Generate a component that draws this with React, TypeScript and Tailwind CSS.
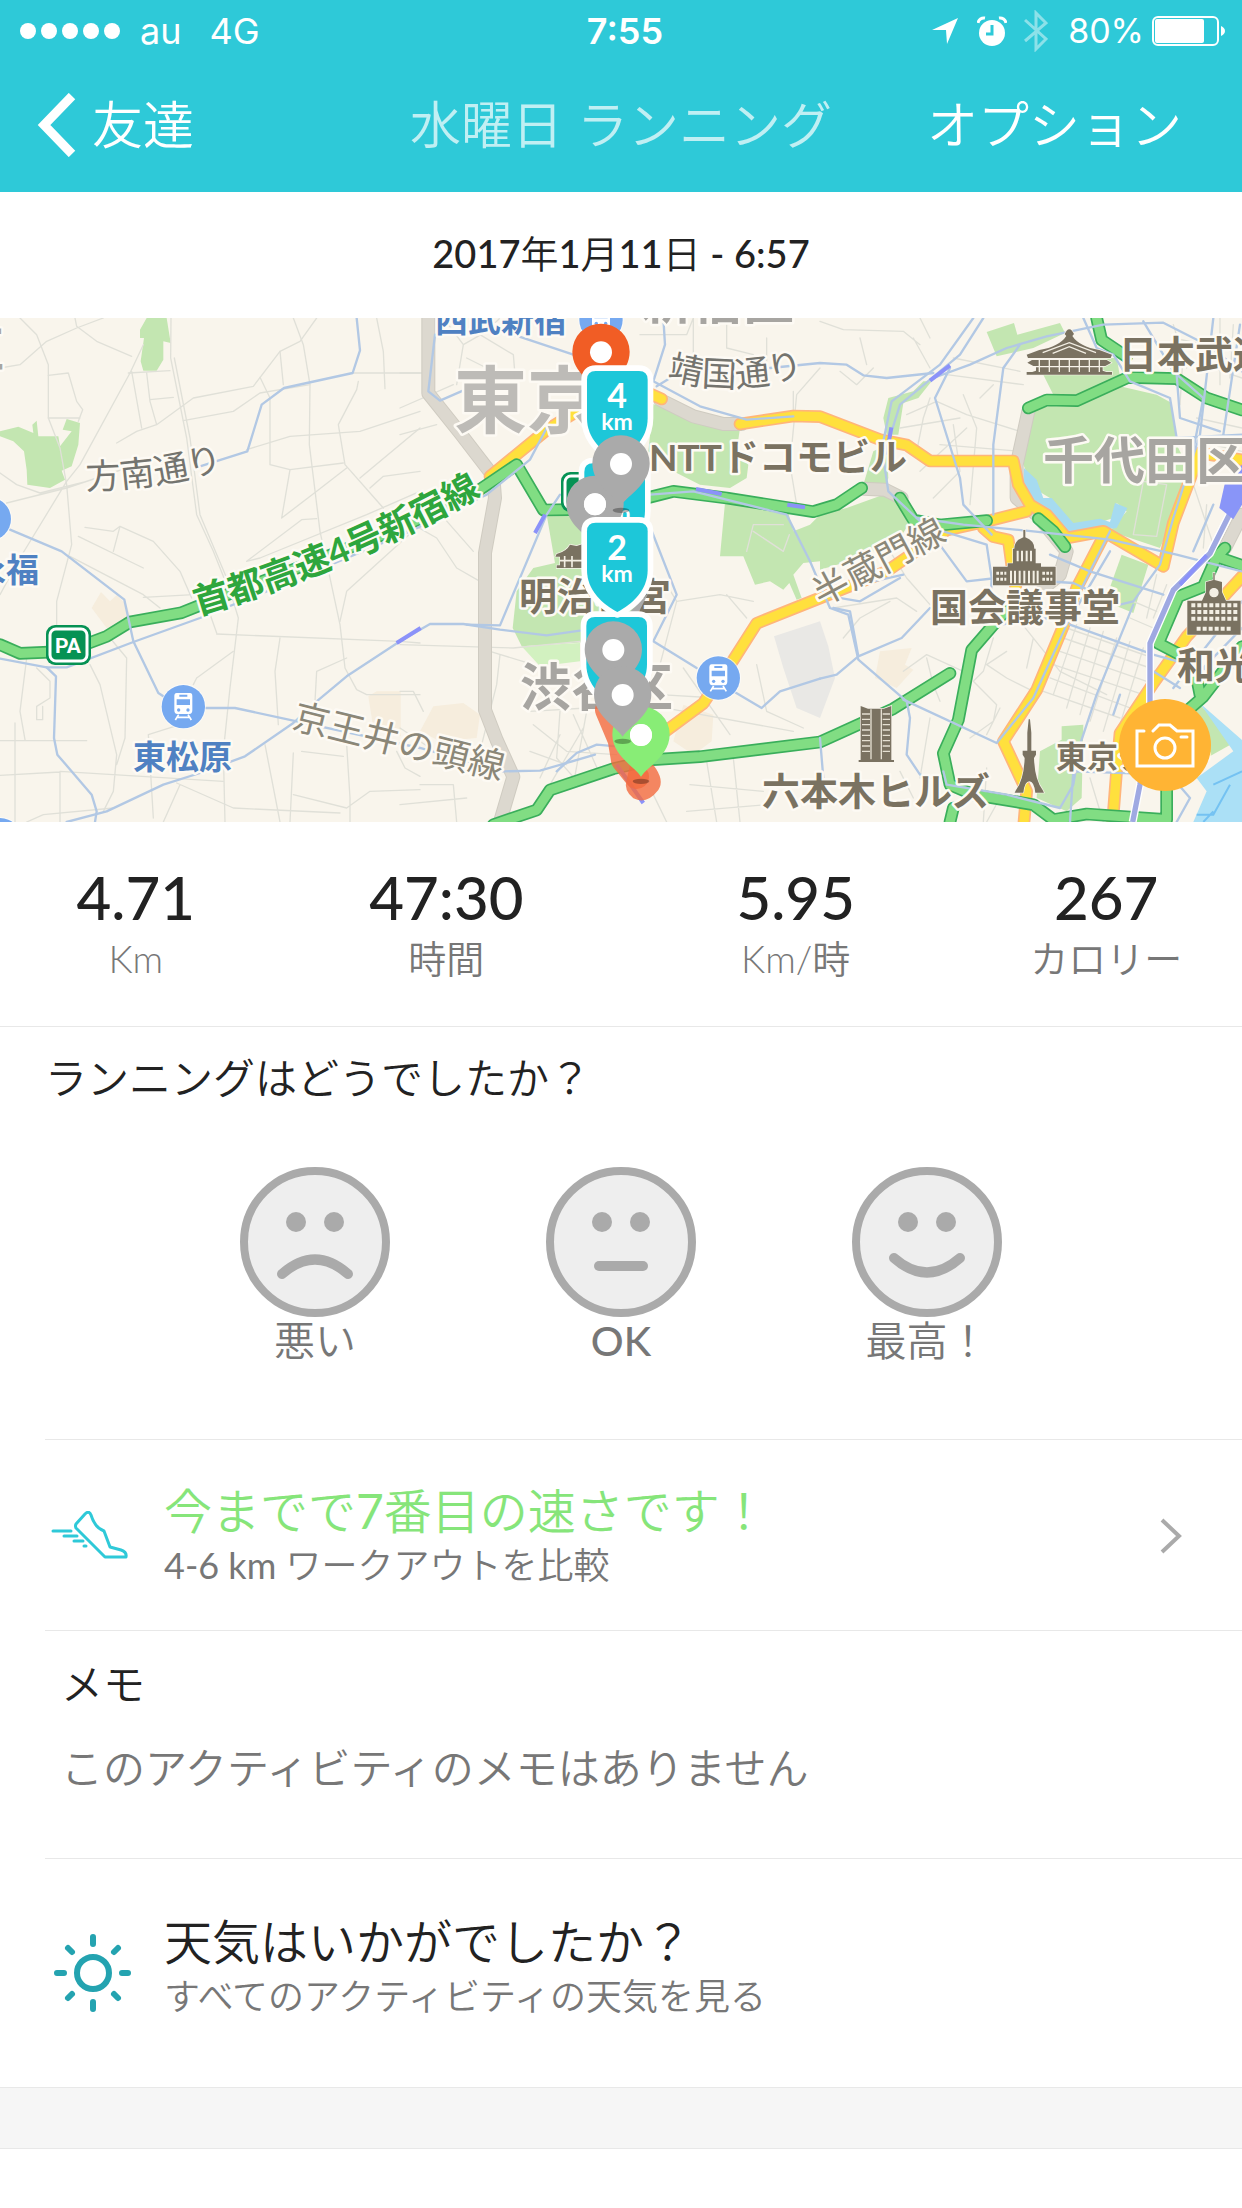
import type { ReactNode } from 'react';

type Line = { x?: number; d: string };

interface LabelData {
  text: string;
  x: number;
  y: number;
  size: number;
  color: string;
  bold?: boolean;
  rotate?: number;
  end?: boolean;
}

const stats = [
  { value: '4.71', unit: 'Km' },
  { value: '47:30', unit: '時間' },
  { value: '5.95', unit: 'Km/時' },
  { value: '267', unit: 'カロリー' },
];

const moods = [
  { label: '悪い', mouth: 'M42 107 Q75 78 108 107' },
  { label: 'OK', mouth: 'M53 99 H97' },
  { label: '最高！', mouth: 'M42 91 Q75 120 108 91' },
];

// Map geometry is drawn on a 3726 x 1512 grid, x shifts a piece to its own tile
const parks: Line[] = [
  { d: 'M440 0 H500 L512 75 L490 70 V125 L470 158 H430 L422 130 L432 60 L420 60 V35 Z' },
  { d: 'M0 340 L55 326 L100 345 L97 320 L110 308 L115 355 H175 L180 385 L215 340 L188 335 L200 303 L240 315 L235 380 L215 445 L185 458 L195 485 L150 510 L82 500 L80 455 L72 400 L40 370 L0 355 Z' },
  { x: 1200, d: 'M760 258 L820 280 L900 318 L1020 330 L1010 400 L1045 440 L1040 480 L990 510 L900 500 L820 460 L745 400 Z' },
  { x: 1200, d: 'M440 590 L540 570 L560 680 L740 780 L690 960 L520 975 L365 985 L338 930 L350 820 L400 750 L465 735 Z' },
  { x: 1200, d: 'M975 555 L1165 585 L1180 640 L1230 620 L1260 590 V730 L1210 735 L1180 770 L1205 840 L1190 845 L1168 795 L1150 815 L1110 790 L1065 800 L1030 715 L960 715 Z' },
  { x: 2460, d: 'M0 590 L80 570 L190 530 L240 560 L265 620 L240 660 L120 720 L0 755 Z' },
  { x: 2460, d: 'M500 42 L582 15 L592 50 L720 15 L735 45 L640 90 L530 115 Z' },
  { x: 2460, d: 'M205 240 L280 220 L310 190 L335 190 L295 240 L250 255 L235 350 L200 350 L190 300 Z' },
  { x: 2460, d: 'M160 400 L200 380 L205 480 L190 520 L130 500 Z' },
  { x: 2460, d: 'M670 170 L820 120 L890 120 L900 175 L770 240 L700 230 Z' },
  { x: 2460, d: 'M640 270 L770 255 L900 205 L1010 230 L1055 255 L1070 380 L1100 440 L1060 600 L1020 690 L870 640 L920 580 L890 555 L880 600 L760 640 L690 540 L640 510 L610 440 Z' },
  { x: 2460, d: 'M905 710 L985 740 L940 885 L855 850 Z' },
  { x: 2460, d: 'M725 1225 L790 1220 L785 1440 L740 1480 L650 1440 L660 1300 L725 1265 Z' },
  { x: 2460, d: 'M1140 1160 L1250 1270 L1160 1320 L1080 1300 L1090 1180 Z' },
];

const sands: Line[] = [
  { d: 'M275 870 L303 822 L330 850 L350 832 L380 860 L395 910 L320 930 Z' },
  { d: 'M1105 1135 L1130 1120 H1202 V1255 L1120 1230 Z' },
  { x: 1200, d: 'M100 1165 L190 1155 L240 1190 L230 1260 L120 1270 L60 1240 Z' },
  { x: 1200, d: 'M850 1160 L940 1190 L935 1270 L880 1310 L820 1270 Z' },
  { x: 2460, d: 'M180 1000 L275 990 L255 1040 L280 1055 L230 1110 L165 1080 Z' },
];

const streets: Line[] = [
  { d: 'M60 0 L110 50 L145 140 V300 L180 390 L200 500 L215 680 L170 850 V930' },
  { d: 'M0 150 L60 140 L140 70 L230 30 L310 0 M225 0 L230 25 L290 70 L395 115 M145 172 L205 165 L230 250 L248 275 L235 310 M145 300 H240' },
  { d: 'M430 80 L390 165 L240 440 L200 490 L60 720 L0 830 M0 465 L50 500 L120 525 L260 490 M20 555 L200 510 L380 450' },
  { d: 'M385 165 L510 158 M395 160 L425 330 M440 165 L450 250 L470 320 M450 245 L520 238 M350 375 L410 340 L470 320 L580 240 L760 205 L840 100 L900 70 L950 0' },
  { d: 'M513 0 L512 120 L560 360 L590 590 L640 700 L700 850 L715 900 L690 1110 L670 1300 L675 1512 M523 120 L570 360 L600 590 L680 780' },
  { d: 'M880 0 L910 80 L930 200 L928 380 L960 640 L1020 920 L1035 1050 L1070 1115 L1100 1130 H1260' },
  { d: 'M1130 0 L1150 100 L1155 212 M1060 165 H1260 M550 308 L700 280 L780 225 L930 200 M840 100 L850 200 M780 178 L810 240 V440 L870 455 L1030 435 M740 395 L870 355 L1080 340 L1260 280' },
  { d: 'M1075 190 L1070 215 L1015 320 L1035 440 L1150 570 M1080 480 L1260 330 M1110 510 L1150 475 L1260 460 M870 455 L845 600 L950 520 L1040 450' },
  { d: 'M740 730 L780 720 L1100 590 L1260 520 M905 605 L950 602 M905 605 L740 730 M1260 620 L1040 820 L1020 910 M650 948 L1200 970 L1260 975' },
  { d: 'M255 628 L340 640 L360 625 L460 670 L540 760 L575 840 M360 625 L340 700 M235 655 L430 750 M210 715 L430 830 L480 870 M430 838 L580 830' },
  { d: 'M590 1080 L700 1000 M590 1080 L580 1100 M840 960 L825 1060 L835 1220 M945 1150 L950 1060 L1040 1020 M620 860 L650 945' },
  { d: 'M270 1040 L300 1100 L350 1310 L340 1420 L310 1480 M330 960 L380 1020 L375 1260 L350 1340 M180 1360 L670 1390 M0 1372 L180 1362 V1512 M0 1268 H260' },
  { d: 'M80 1020 L60 1180 L75 1265 M45 1215 V1512 M110 1050 L150 1090 V1140 L110 1165 V1205 H128 V1165 M445 1250 L540 1220 L590 1210 M445 1250 L460 1500 M340 1470 L130 1490 L80 1512' },
  { d: 'M530 1395 L700 1470 L1020 1485 M540 1400 L490 1512 M880 1305 L870 1512 M1050 1512 V1440 L1040 1280 M880 1430 L1040 1470 L1110 1420 L1260 1415 M905 1300 L1030 1315 M1190 1300 L1215 1350 L1260 1375 M795 1280 L840 1512' },
  { x: 1200, d: 'M0 165 H70 M130 0 L190 80 L170 200 M190 80 L260 40 L300 0 M200 120 L320 180 M240 50 L340 110 L345 170 M0 270 L160 200 M0 350 L110 320' },
  { x: 1200, d: 'M40 620 L110 660 L170 750 L240 790 M0 980 L340 990 L540 970 M120 560 L230 540 M110 575 L220 700' },
  { x: 1200, d: 'M270 1000 L400 1040 M300 1010 L290 1100 L240 1300 M0 1120 H40 L70 1180 M0 1230 L90 1290 M60 1400 H160 L170 1512 M0 1460 L200 1440' },
  { x: 1200, d: 'M390 1180 L560 1170 M400 1220 L500 1300 L650 1310 M420 1380 L480 1250 M450 1400 L550 1230 M480 1180 L470 1320 L540 1400 M520 1190 L600 1370 M390 1300 L500 1340 M560 1180 L520 1400' },
  { x: 1200, d: 'M800 800 L830 850 L960 830 L1060 850 M830 850 L780 1040 M980 830 L1040 900 M780 1130 L950 1140 L1010 1080 M740 1160 L1180 1240 M850 1050 L990 1250 M1070 1040 L1100 1180 L1210 1230' },
  { x: 1200, d: 'M920 1330 L950 1512 M1000 1320 L1020 1512 M870 1400 L1090 1420 M860 1480 L1100 1460 M760 1430 L800 1512 M720 50 H860 L880 0 M880 0 V120 M980 0 V90 L1060 110 M1100 60 V140 M1180 220 V300' },
  { x: 1200, d: 'M1260 150 L1190 230 L1170 440 L1190 560 M1060 640 L1150 700 L1168 650 M1040 700 L1060 620 L1150 620' },
  { x: 2460, d: 'M0 10 L70 35 L250 40 L300 80 M60 160 L110 200 L160 150 M120 60 L140 140 M280 60 L330 150 M300 0 L330 60 M400 120 L600 160 M380 170 L610 200' },
  { x: 2460, d: 'M260 290 L350 250 L440 290 L600 340 M240 330 L420 300 M290 400 L310 300 L330 240 M300 460 L440 330 M340 540 L420 460 L400 320 M430 230 L470 330 L450 560 M360 380 L600 400 M480 240 L520 200' },
  { x: 2460, d: 'M210 700 L260 780 L330 860 M40 870 L230 840 L290 880 M70 960 L120 900 L210 850 M320 1020 L340 1100 L360 1150 M250 1060 L320 1010 L430 1060' },
  { x: 2460, d: 'M520 960 L490 1060 L460 1090 L530 1160 L520 1210 L450 1260 M560 1000 L500 1040 L560 1080 L640 1120 M600 910 L720 1060 L860 1130 M640 960 L620 1050 M540 1170 L500 1250 M300 1380 L330 1200 M240 1360 L280 1440' },
  { x: 2460, d: 'M740 930 L1000 1020 M730 960 L990 1050 M720 1000 L980 1090 M700 1040 L970 1130 M690 1080 L930 1170 M670 1120 L900 1200 M770 920 L700 1130 M810 930 L740 1170 M850 940 L780 1190 M890 960 L810 1210 M930 970 L850 1240 M970 990 L900 1220' },
  { x: 2460, d: 'M940 850 L1010 880 M930 900 L1000 930 M1010 770 L980 900 M1040 800 L1000 900 M1170 80 L1266 110 M1090 100 L1080 260 M1130 300 L1266 330 M1090 360 L1266 400 M1120 130 L1266 180 M1060 60 L1200 90' },
  { x: 2460, d: 'M1060 20 L1100 150 M1200 0 V200 M1240 20 L1230 180 M1160 560 L1150 690 M1120 500 L1180 680 M970 490 L940 650 L1010 655 L1040 500 Z M500 1350 L490 1512 M540 1440 L500 1512 M810 1380 L850 1512' },
];

const rails: Line[] = [
  { d: 'M1070 0 L1080 97 L1058 165 L852 210 L785 260 L742 400 L600 445' },
  { d: 'M30 635 L185 700 L373 845 L400 970 L475 1125 L490 1135' },
  { d: 'M0 1022 L140 1048 H200 L400 972 L600 900 L850 800 L1230 640 L1460 530 L1590 425 L1640 330' },
  { d: 'M140 1048 L168 1075 L162 1260 L172 1310 L275 1430 L290 1480 L285 1512' },
  { d: 'M610 1170 H705 L880 1208 L1260 1290 L1510 1360 L1620 1358 L1700 1335 L1785 1310' },
  { d: 'M200 1512 L320 1480 L490 1400 L600 1365 L735 1315 L880 1215 L950 1150 L1040 1075 L1200 970 L1290 918 L1390 918 L1500 935 L1640 952 L1740 938' },
  { x: 1200, d: 'M105 50 L85 220 L120 248 L230 200 M340 50 L520 110 M200 920 L300 922 L440 590 L480 530 M470 1360 L530 1305 L590 1280 L650 1285' },
  { x: 1200, d: 'M790 0 L795 80 L760 190 L900 265 L1040 305 L1180 295 M770 205 L860 150 M1110 150 L1260 135 L1340 140 L1390 172 L1460 180 L1600 165 M740 600 L830 830 L760 970 L890 1050 M1000 1120 L1085 1170 L1140 1120 L1260 1082' },
  { x: 1200, d: 'M750 530 L880 520 L1160 590 L1230 730 L1290 870 L1345 890 L1375 1025 L1520 1150 L1530 1200 L1520 1310 L1560 1370 L1600 1380' },
  { x: 2460, d: 'M460 0 L360 140 L215 250 L190 370 M490 0 L420 110 L240 260 L190 420 L205 520 L290 600 L430 620 L640 640 L870 665 L1070 710 L1266 760' },
  { x: 2460, d: 'M0 1082 L50 1070 L115 1015 L245 960 L330 870' },
  { x: 2460, d: 'M340 180 L450 140 L560 90 L680 55 L850 20 L1030 14 L1160 80 L1266 160 M600 80 L550 150 L520 380 V590 M390 150 L345 240 L420 480 L430 560 L515 650' },
  { x: 2460, d: 'M290 600 L330 640 L440 790 L530 780 L760 795 L900 860 L940 850 L1020 740 L1060 600 L1140 350 L1180 0 M870 640 L830 720 L770 840 M370 640 L500 680 L515 780 L512 840' },
  { x: 2460, d: 'M790 0 L830 90 L880 110 L930 190 L1050 240 L1070 360 L1266 350 M1070 170 L1080 300 L1200 340 M970 10 L1060 160 L1150 240 L1100 500 M1260 20 L1210 350 M1180 560 L1120 700' },
  { x: 2460, d: 'M250 1145 L530 1275 L640 1140 L740 920 L870 700 M750 920 L1000 1010 L1180 1060 M540 920 L690 900 M0 1260 L10 1380 M780 1280 L830 1130 L940 860 M370 1360 L380 1400 L560 1430 L720 1470 L760 1400 L780 1280' },
  { x: 2460, d: 'M880 1190 L900 1130 M750 1512 L760 1360 L1050 1370 L1110 1440 L1070 1512 M1000 1060 L1080 1110 M1060 1110 L1266 850 M1140 1060 L1266 930 M690 710 L810 760 L1030 830' },
  { x: 2460, d: 'M240 780 L120 850 L0 830 M40 870 L90 880 L115 1015 M160 790 L250 770' },
];

const tunnels: Line[] = [
  { x: 1200, d: 'M85 0 V226 L180 345 L280 475 L285 540 L255 705 V1176 L290 1266 L340 1376 L300 1512' },
  { x: 1200, d: 'M780 245 L880 295 L970 318 L1025 318' },
  { x: 2460, d: 'M625 280 L590 440 V540 L650 590 L740 700 L720 770 L670 810' },
  { x: 2460, d: 'M130 512 L195 515 L245 540' },
  { x: 2460, d: 'M1266 590 L1215 690' },
];

const arterials: Line[] = [
  { x: 1200, d: 'M270 475 L440 336 L560 262' },
  { x: 1200, d: 'M745 225 L785 243' },
  { x: 1200, d: 'M1020 318 L1180 294 L1260 296 L1440 365 L1520 381 L1590 429 H1840 L1855 500 L1890 560 L1940 590 L2000 660 L2110 640 L2290 745 L2320 615 L2400 405 L2526 426' },
  { x: 1200, d: 'M780 1252 L910 1156 L950 1096 L1000 1026 L1070 916 L1260 840 L1460 760 L1640 636 L1760 610 L1880 580' },
  { x: 2460, d: 'M490 630 L520 656 L565 666 L575 740 L595 850' },
  { x: 2460, d: 'M850 656 L770 810 L740 900 L650 1116 L550 1270 L620 1420 L612 1512' },
  { x: 2460, d: 'M1266 776 L1100 956 L1000 1096 L900 1246 L890 1356 L878 1512' },
];

const expressways: Line[] = [
  { d: 'M0 980 L60 1006 L200 1000 L320 955 L390 912 L545 884 L640 846 L850 766 L1200 630 L1430 521 L1550 440 L1630 576 L1710 575' },
  { x: 1200, d: 'M740 540 L820 520 L980 540 L1240 581 L1310 560 L1385 510' },
  { x: 2460, d: 'M240 540 L280 606 L360 621 L500 608' },
  { x: 2460, d: 'M655 602 L700 640 L735 686' },
  { x: 2460, d: 'M830 0 L845 66 L920 116' },
  { x: 2460, d: 'M625 270 L680 246 L770 248 L925 178 L1070 182 L1160 240 L1266 276' },
  { x: 2460, d: 'M1215 690 L1190 716 L1266 742 M1190 716 L1150 806 L1075 836 L1015 976 L1080 1010' },
  { x: 2460, d: 'M1266 986 L1150 1136 L1100 1180 M1140 1130 L1130 1080' },
  { x: 2460, d: 'M555 880 L455 996 L415 1206 L370 1306 L390 1400 L460 1430 L640 1460 L700 1505 L800 1488 L1040 1505 V1410 M400 1470 L390 1512' },
  { x: 1200, d: 'M280 1520 L410 1476 L450 1416 L640 1352 L760 1325 L900 1316 L1260 1272 L1480 1172 L1650 1066' },
];

const STATION_BLUE = '#4f81c2';
const OLIVE = '#7a7261';
const STONE = '#a7a5a1';

const labels: LabelData[] = [
  { text: '中野区', x: 4, y: 49, size: 48, color: STONE, bold: true, end: true },
  { text: '永福', x: 39, y: 264, size: 33, color: STATION_BLUE, bold: true, end: true },
  { text: '東松原', x: 133, y: 451, size: 33, color: STATION_BLUE, bold: true },
  { text: '西武新宿', x: 435, y: 14, size: 33, color: STATION_BLUE, bold: true },
  { text: '新宿区', x: 641, y: 1, size: 51, color: STONE, bold: true },
  { text: '東京', x: 454, y: 109, size: 73, color: '#bdbbb7', bold: true },
  { text: '京王井の頭線', x: 291, y: 410, size: 36, color: '#8b8778', rotate: 14 },
  { text: '半蔵門線', x: 821, y: 289, size: 36, color: '#8b8778', rotate: -28 },
  { text: 'NTTドコモビル', x: 649, y: 153, size: 37, color: OLIVE, bold: true },
  { text: '明治神宮', x: 519, y: 292, size: 38, color: OLIVE, bold: true },
  { text: '渋谷区', x: 520, y: 388, size: 51, color: STONE, bold: true },
  { text: '六本木ヒルズ', x: 762, y: 487, size: 38, color: OLIVE, bold: true },
  { text: '国会議事堂', x: 930, y: 303, size: 38, color: OLIVE, bold: true },
  { text: '千代田区', x: 1043, y: 161, size: 51, color: STONE, bold: true },
  { text: '日本武道館', x: 1119, y: 50, size: 38, color: OLIVE, bold: true },
  { text: '和光', x: 1177, y: 361, size: 38, color: OLIVE, bold: true },
  { text: '東京タワー', x: 1056, y: 450, size: 31, color: OLIVE, bold: true },
];

const labelClass = "font-['Lato','Noto_Sans_CJK_JP',sans-serif]";

function Lines({ items, color, width }: { items: Line[]; color: string; width: number }) {
  return (
    <g fill="none" stroke={color} strokeWidth={width} strokeLinecap="round" strokeLinejoin="round">
      {items.map((item) => (
        <path key={item.d} d={item.d} transform={`translate(${item.x ?? 0} 0)`} />
      ))}
    </g>
  );
}

function Areas({ items, color }: { items: Line[]; color: string }) {
  return (
    <g fill={color}>
      {items.map((item) => (
        <path key={item.d} d={item.d} transform={`translate(${item.x ?? 0} 0)`} />
      ))}
    </g>
  );
}

function Station({ x, y }: { x: number; y: number }) {
  return (
    <g transform={`translate(${x} ${y})`}>
      <circle r="68" fill="#fff" opacity="0.6" />
      <circle r="65" fill="#76a9f0" />
      <path d="M-20 -41 H20 Q27 -41 27 -32 V10 Q27 22 18 22 H-18 Q-27 22 -27 10 V-32 Q-27 -41 -20 -41 Z" fill="#fff" />
      <path d="M-12 -36 H12 V-30 H-12 Z M-20 -22 H20 V-5 H-20 Z" fill="#76a9f0" />
      <circle cx="-14" cy="10" r="5" fill="#76a9f0" />
      <circle cx="14" cy="10" r="5" fill="#76a9f0" />
      <path d="M-14 24 L-24 40 M14 24 L24 40 M-18 32 H18" stroke="#fff" strokeWidth="5" />
    </g>
  );
}

function Pin({ x, y, color, shadow }: { x: number; y: number; color: string; shadow?: boolean }) {
  return (
    <g transform={`translate(${x} ${y})`}>
      {shadow && <ellipse cy="139" rx="25" ry="8" fill="#000" opacity="0.3" />}
      <path d="M0 125 C-22 92 -86 62 -86 -2 A86 84 0 1 1 86 -2 C86 62 22 92 0 125 Z" fill={color} />
      <circle r="33" fill="#fff" />
    </g>
  );
}

function Shield({ x, y }: { x: number; y: number }) {
  return (
    <path
      transform={`translate(${x} ${y})`}
      d="M-65 0 H65 Q91 0 91 26 V142 C91 204 44 244 0 268 C-44 244 -91 204 -91 142 V26 Q-91 0 -65 0 Z"
      fill="#1dc7d9"
      stroke="#fff"
      strokeWidth="34"
      strokeLinejoin="round"
      className="[paint-order:stroke]"
    />
  );
}

function ShieldText({ x, y, value }: { x: number; y: number; value: string }) {
  return (
    <g fill="#fff" textAnchor="middle" className="font-['Lato',sans-serif] font-bold">
      <text x={x} y={y + 37} fontSize="34">{value}</text>
      <text x={x} y={y + 59} fontSize="23">km</text>
    </g>
  );
}

function Landmarks() {
  return (
    <g fill={OLIVE} stroke="#f8f4ec" strokeWidth="4" className="[paint-order:stroke]">
      {/* Budokan */}
      <g transform="translate(3208 36)">
        <path d="M-8 2 Q0 -6 8 2 L14 12 L9 18 Q30 50 90 60 L128 74 L124 84 H-124 L-128 74 L-90 60 Q-30 50 -9 18 L-14 12 Z" />
        <path d="M-112 90 H112 L126 98 L108 108 H-108 L-126 98 Z M-100 112 H100 V122 L118 128 H-118 L-100 122 Z M-128 126 H128 V134 H-128 Z" />
        <path d="M-80 68 L0 38 L80 68 M-50 70 L0 50 L50 70 M-90 90 V126 M-60 90 V126 M-30 90 V126 M0 90 V126 M30 90 V126 M60 90 V126 M90 90 V126" fill="none" stroke="#f3efe4" strokeWidth="4" />
      </g>
      {/* Diet building */}
      <g transform="translate(3073 636)">
        <path d="M-3 0 H3 V22 Q30 32 30 56 H34 V100 H50 V110 H94 V166 H-94 V110 H-50 V100 H-34 V56 H-30 Q-30 32 -3 22 Z" />
        <path d="M-20 62 V94 M-7 62 V94 M7 62 V94 M20 62 V94 M-40 122 V160 M-28 122 V160 M-14 122 V160 M0 122 V160 M14 122 V160 M28 122 V160 M40 122 V160" fill="none" stroke="#f3efe4" strokeWidth="6" />
        <path d="M-84 130 H-54 M-84 148 H-54 M54 130 H84 M54 148 H84" fill="none" stroke="#f3efe4" strokeWidth="9" strokeDasharray="8 4" />
      </g>
      {/* Clock tower store */}
      <g transform="translate(3642 764)">
        <path d="M-2 0 H2 V22 L24 28 V58 L36 84 H80 V186 H-80 V84 H-36 L-24 58 V28 L-2 22 Z" />
        <circle cy="60" r="12" fill="#f3efe4" />
        <path d="M-68 98 H70 M-68 118 H70 M-68 138 H70 M-52 168 H54" fill="none" stroke="#f3efe4" strokeWidth="12" strokeDasharray="12 6" />
      </g>
      {/* Hills tower */}
      <g transform="translate(2628 1164)">
        <path d="M-46 0 L-24 8 H24 L46 0 V164 H-46 Z M-52 162 H54 V168 H-52 Z" />
        <path d="M-15 10 V160 M16 10 V160 M-42 24 H-18 M-42 40 H-18 M-42 56 H-18 M-42 72 H-18 M-42 88 H-18 M-42 104 H-18 M-42 120 H-18 M-42 136 H-18 M20 24 H42 M20 40 H42 M20 56 H42 M20 72 H42 M20 88 H42 M20 104 H42 M20 120 H42 M20 136 H42" fill="none" stroke="#e5e0d2" strokeWidth="4" />
      </g>
      {/* Tokyo tower */}
      <g transform="translate(3088 1204)">
        <path d="M-2 0 H2 L6 40 V94 H20 V106 L14 116 Q16 180 40 212 L44 220 H18 Q14 186 0 186 Q-14 186 -18 220 H-44 L-40 212 Q-16 180 -14 116 L-20 106 V94 H-6 V40 Z" />
      </g>
      {/* Shrine */}
      <g transform="translate(1740 670)">
        <path d="M-70 38 Q-40 30 -30 10 L-10 14 L20 4 V80 H-70 V72 H-60 V46 H-74 Z" />
        <path d="M-46 44 V78 M-24 44 V78 M-60 58 H10" fill="none" stroke="#f3efe4" strokeWidth="5" />
      </g>
    </g>
  );
}

function RouteMap() {
  return (
    <svg viewBox="0 0 1242 504" preserveAspectRatio="xMidYMid slice" className="block h-[504px] w-full" role="img" aria-label="ルート">
      <rect width="1242" height="504" fill="#f9f5ec" />
      <defs>
        <path id="expresswayName" d="M198 297 Q343 255 487 174" />
        <path id="honanName" d="M86 171 Q160 171 226 150" />
        <path id="yasukuniName" d="M667 60 Q737 80 808 55" />
      </defs>

      <g transform="scale(0.33333)">
        <Areas items={parks} color="#c3e6b1" />
        <path d="M1565 985 L1740 975 L1740 1030 L1620 1045 Z" fill="#d2f1c0" />
        <Areas items={sands} color="#f6eddd" />
        <path d="M2322 955 L2460 910 L2485 985 L2505 1080 L2460 1200 L2390 1170 L2350 1050 Z" fill="#e9e8e5" />
        <path d="M3072 450 L3110 485 L3130 540 L3155 540 L3220 615 L3300 602 L3330 612 L3345 555 L3382 570 L3350 630 L3310 635 L3220 650 L3160 630 L3100 560 L3070 500 Z" fill="#a6dbf0" />
        <path d="M3600 1156 L3726 1266 V1512 H3580 L3620 1420 L3590 1380 L3700 1300 Z" fill="#abe0f6" />
        <path d="M3590 1490 H3640 L3690 1400 M3640 1480 L3610 1512 M3640 1400 L3726 1360" stroke="#74c2f2" strokeWidth="6" fill="none" />

        <Lines items={streets} color="#e0e0d8" width={4} />
        <Lines items={tunnels} color="#cfcbc1" width={42} />
        <Lines items={tunnels} color="#dcd8cf" width={36} />
        <Lines items={arterials} color="#ffb57a" width={38} />
        <Lines items={arterials} color="#ffe03d" width={28} />
        <Lines items={expressways} color="#3aae5b" width={38} />
        <Lines items={expressways} color="#81dd83" width={28} />
        <Lines items={rails} color="#b2c8e4" width={7} />

        {/* JR line */}
        <path d="M3700 566 L3630 706 L3520 816 L3450 976 V1170 L3420 1400 L3398 1512" fill="none" stroke="#fff" strokeWidth="24" />
        <path d="M3700 566 L3630 706 L3520 816 L3450 976 V1170 L3420 1400 L3398 1512" fill="none" stroke="#9fa9e2" strokeWidth="16" />
        <path d="M3676 490 L3726 440 V560 L3700 604 L3658 570 Z" fill="#8995f8" />
        <path d="M1190 975 L1262 930 M1605 645 L1635 590 M2790 188 L2850 142 M2660 410 L2674 328 M2088 513 L2165 528 M2362 560 L2415 568 M3540 800 L3620 712 M1850 1340 L1930 1455" fill="none" stroke="#8b92f9" strokeWidth="12" />

        <Station x={550} y={1166} />
        <Station x={-32} y={603} />
        <Station x={0} y={1565} />
        <Station x={2155} y={1080} />
        <Station x={1803} y={6} />

        <Landmarks />
      </g>

      {/* Parking area signs */}
      <g>
        <rect x="46" y="307" width="45" height="40" rx="9" fill="#069254" />
        <rect x="50" y="311" width="37" height="32" rx="6" fill="none" stroke="#fff" strokeWidth="3" />
        <text x="68" y="335" fontSize="21" fill="#fff" textAnchor="middle" className="font-['Roboto',sans-serif] font-bold">PA</text>
        <rect x="561" y="154" width="45" height="40" rx="9" fill="#069254" />
        <rect x="565" y="158" width="37" height="32" rx="6" fill="none" stroke="#fff" strokeWidth="3" />
      </g>

      <g stroke="#fdfaf4" strokeWidth="5" strokeLinejoin="round" className={`${labelClass} [paint-order:stroke]`}>
        {labels.map((label) => (
          <text
            key={label.text}
            x={label.x}
            y={label.y}
            fontSize={label.size}
            fill={label.color}
            textAnchor={label.end ? 'end' : 'start'}
            transform={label.rotate ? `rotate(${label.rotate} ${label.x} ${label.y})` : undefined}
            className={label.bold ? 'font-bold' : 'font-normal'}
          >
            {label.text}
          </text>
        ))}
        <text fontSize="35" fill="#74746f"><textPath href="#honanName">方南通り</textPath></text>
        <text fontSize="35" fill="#74746f"><textPath href="#yasukuniName">靖国通り</textPath></text>
        <text fontSize="36" fill="#2ea63d" className="font-bold"><textPath href="#expresswayName">首都高速4号新宿線</textPath></text>
      </g>

      {/* Route and markers */}
      <g transform="translate(400 -8) scale(0.33333)">
        <path d="M622 1200 L660 1290 L670 1350 L710 1400" fill="none" stroke="#f26a3e" strokeWidth="74" strokeLinecap="round" strokeLinejoin="round" opacity="0.8" />
        <path d="M690 1365 L760 1365 Q795 1410 775 1440 Q740 1485 700 1465 Q670 1440 680 1410 Z" fill="#f26a3e" opacity="0.8" />
        <Pin x={603} y={127} color="#f15d25" />
        <Shield x={652} y={183} />
        <Shield x={644} y={460} />
      </g>
      <ShieldText x={617} y={53} value="4" />
      <ShieldText x={615} y={145} value="3" />
      <g transform="translate(400 -8) scale(0.33333)">
        <Pin x={585} y={583} color="#aaaaaa" />
        <Pin x={663} y={462} color="#aaaaaa" shadow />
        <circle cx="585" cy="583" r="33" fill="#fff" />
        <path d="M690 905 L745 850 L712 915 Z" fill="#aaaaaa" />
        <Shield x={650} y={921} />
        <Shield x={652} y={638} />
        <Pin x={723} y={1275} color="#88ed76" shadow />
        <Pin x={640} y={1020} color="#aaaaaa" />
        <Pin x={668} y={1155} color="#aaaaaa" shadow />
        <circle cx="723" cy="1275" r="33" fill="#fff" />
      </g>
      <ShieldText x={617} y={205} value="2" />
    </svg>
  );
}

function StatusBar() {
  return (
    <div className="flex h-[62px] items-center justify-between pr-3 pl-5 font-['Inter',sans-serif] text-[36px] leading-[40px]">
      <div className="flex flex-1 items-center">
        <span className="flex gap-[5px]">
          {[0, 1, 2, 3, 4].map((dot) => (
            <span key={dot} className="size-4 rounded-full bg-white" />
          ))}
        </span>
        <span className="ml-5">au</span>
        <span className="ml-7">4G</span>
      </div>
      <span className="font-semibold">7:55</span>
      <div className="flex flex-1 items-center justify-end">
        <svg width="28" height="28" viewBox="0 0 28 28" fill="#fff">
          <path d="M1 13 L27 1 L16 27 L15 13 Z" />
        </svg>
        <svg width="30" height="30" viewBox="0 0 30 30" className="ml-[18px]" fill="#fff">
          <circle cx="15" cy="17" r="13" />
          <path d="M1 7 A6 6 0 0 1 8 2 M29 7 A6 6 0 0 0 22 2" fill="none" stroke="#fff" strokeWidth="3" />
          <path d="M15 9 V18 H9" fill="none" stroke="#2ec9d8" strokeWidth="3" />
        </svg>
        <svg width="24" height="42" viewBox="0 0 24 42" className="ml-[17px] opacity-45" fill="none" stroke="#fff" strokeWidth="3">
          <path d="M1 10 L22 29 L12 39 V3 L22 13 L1 31" />
        </svg>
        <span className="mr-2 ml-5 text-[34px]">80%</span>
        <svg width="78" height="30" viewBox="0 0 78 30">
          <rect x="1" y="1" width="65" height="28" rx="5" fill="none" stroke="#fff" strokeWidth="2" />
          <rect x="3" y="3" width="49" height="24" rx="2" fill="#fff" />
          <path d="M69 10 Q73 12 73 15 Q73 18 69 20 Z" fill="#fff" />
        </svg>
      </div>
    </div>
  );
}

function Header() {
  return (
    <header className="bg-[#2ec9d8] text-white">
      <StatusBar />
      <nav className="grid h-[130px] grid-cols-[1fr_auto_1fr] items-center px-9 pb-1 text-[51px] leading-[64px] font-[350]">
        <button type="button" className="flex items-center gap-4">
          <svg width="40" height="64" viewBox="0 0 40 64" fill="none" stroke="#fff" strokeWidth="9">
            <path d="M36 3 L8 32 L36 61" />
          </svg>
          友達
        </button>
        <h1 className="text-white/70">水曜日 ランニング</h1>
        <button type="button" className="pr-6 text-right">オプション</button>
      </nav>
    </header>
  );
}

function MoodPicker() {
  return (
    <section className="px-[45px] pt-5 pb-[74px]">
      <h2 className="text-[42px] leading-[62px] font-[350]">ランニングはどうでしたか？</h2>
      <div className="mt-[58px] flex justify-center gap-[156px] text-[41px] leading-[48px] text-[#777]">
        {moods.map((mood) => (
          <button key={mood.label} type="button" className="flex w-[150px] flex-col items-center whitespace-nowrap">
            <svg width="150" height="150" viewBox="0 0 150 150" fill="none">
              <circle cx="75" cy="75" r="71" fill="#eee" stroke="#aaa" strokeWidth="8" />
              <circle cx="56" cy="55" r="10" fill="#aaa" />
              <circle cx="94" cy="55" r="10" fill="#aaa" />
              <path d={mood.mouth} stroke="#aaa" strokeWidth="10" strokeLinecap="round" />
            </svg>
            <span className={mood.label === 'OK' ? 'font-medium' : 'font-[350]'}>{mood.label}</span>
          </button>
        ))}
      </div>
    </section>
  );
}

function InfoRow({ icon, title, subtitle, green, chevron }: {
  icon: ReactNode;
  title: ReactNode;
  subtitle: ReactNode;
  green?: boolean;
  chevron?: boolean;
}) {
  return (
    <button type="button" className="flex w-full items-center pr-[60px] pl-[6px] text-left">
      <span className="flex w-[113px] shrink-0">{icon}</span>
      <span className="flex flex-1 flex-col font-[350]">
        <span className={green ? 'text-[48px] leading-[58px] text-[#86e57a]' : 'text-[48px] leading-[58px]'}>{title}</span>
        <span className="text-[36px] leading-[50px] text-[#777]">{subtitle}</span>
      </span>
      {chevron && (
        <svg width="22" height="36" viewBox="0 0 22 36" fill="none" stroke="#aaa" strokeWidth="4">
          <path d="M2 2 L19 18 L2 34" />
        </svg>
      )}
    </button>
  );
}

const shoeIcon = (
  <svg width="78" height="50" viewBox="0 0 78 50" fill="none" stroke="#2ec9d8" strokeWidth="3" strokeLinecap="round" strokeLinejoin="round">
    <path d="M2 20 H20 M13 25 H26 M23 30 H32 M33 35 H35" />
    <path d="M25 13 L34 3 Q38 -1 40 4 Q44 17 53 20 L59 36 L70 39 Q76 41 75 46 H54 L25 17 Q24 15 25 13 Z" />
  </svg>
);

const sunIcon = (
  <svg width="80" height="80" viewBox="0 0 80 80" className="mt-3" fill="none" stroke="#24a3b0" strokeWidth="6" strokeLinecap="round">
    <circle cx="42" cy="40" r="16" />
    <path d="M42 4 V11 M42 69 V76 M6 40 H13 M71 40 H77 M17 15 L21 19 M63 61 L67 65 M17 65 L21 61 M63 19 L67 15" />
  </svg>
);

export default function App() {
  return (
    <main className="min-h-screen bg-white font-['Lato','Noto_Sans_CJK_JP',sans-serif] text-[#222]">
      <Header />

      <p className="pt-9 pb-10 text-center text-[38px] leading-[50px] font-medium">
        2017<span className="font-[350]">年</span>1<span className="font-[350]">月</span>11<span className="font-[350]">日</span> - 6:57
      </p>

      {/* Map */}
      <div className="relative">
        <RouteMap />
        <button type="button" aria-label="カメラ" className="absolute right-[31px] bottom-[31px] flex size-[92px] items-center justify-center rounded-full bg-[#ffb434]">
          <svg width="60" height="46" viewBox="0 0 60 46" fill="none" stroke="#fff" strokeWidth="3">
            <path d="M9 9 H2 V44 H58 V9 H42 L35 3 H24 L18 9" strokeLinecap="round" />
            <circle cx="30" cy="26" r="10" />
            <path d="M46 15 H52" strokeLinecap="round" />
          </svg>
        </button>
      </div>

      {/* Stats */}
      <dl className="grid grid-cols-[7fr_9fr_9fr_7fr] border-b border-[#e8e8e8] pt-[38px] pb-11 text-center">
        {stats.map((stat) => (
          <div key={stat.unit} className="flex flex-col-reverse">
            <dt className="text-[38px] leading-[48px] font-[350] text-[#777]">{stat.unit}</dt>
            <dd className="text-[60px] leading-[74px] font-medium">{stat.value}</dd>
          </div>
        ))}
      </dl>

      <MoodPicker />

      <div className="ml-[45px]">
        <section className="border-y border-[#e8e8e8] pt-[42px] pb-10">
          <InfoRow
            icon={shoeIcon}
            title={<>今までで<span className="font-normal">7</span>番目の速さです！</>}
            subtitle={<><span className="font-normal">4-6 km </span>ワークアウトを比較</>}
            green
            chevron
          />
        </section>

        <section className="border-b border-[#e8e8e8] px-4 pt-[22px] pb-[59px]">
          <h2 className="text-[42px] leading-[62px] font-[350]">メモ</h2>
          <p className="mt-[22px] text-[42px] leading-[62px] font-[350] text-[#777]">このアクティビティのメモはありません</p>
        </section>

        <section className="pt-[54px] pb-[66px]">
          <InfoRow icon={sunIcon} title="天気はいかがでしたか？" subtitle="すべてのアクティビティの天気を見る" />
        </section>
      </div>

      <div className="h-[62px] border-y border-[#e8e8e8] bg-[#f6f6f6]" />
    </main>
  );
}
